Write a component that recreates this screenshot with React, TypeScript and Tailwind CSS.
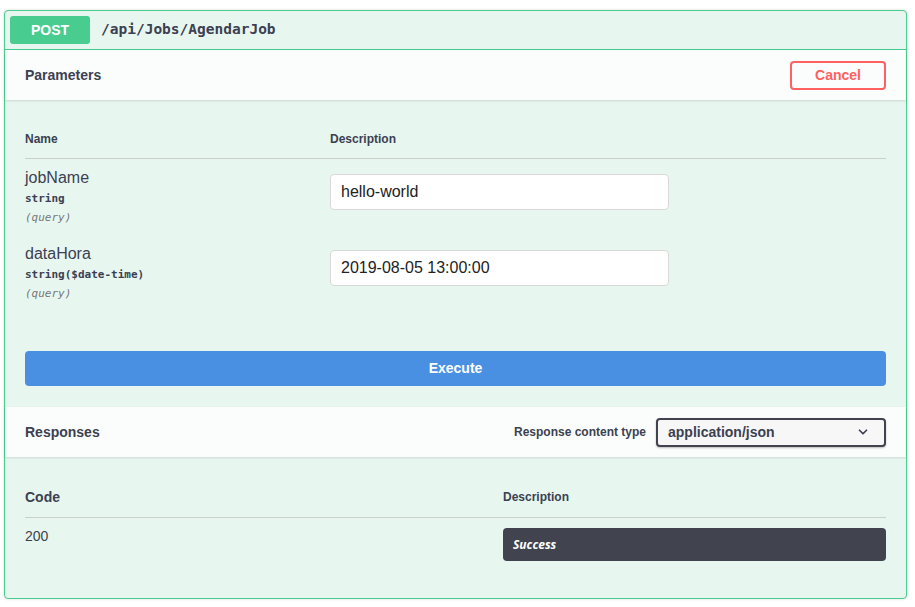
import React from 'react'
import { ChevronDown } from 'lucide-react'

const sans = "font-['Liberation_Sans',Arial,sans-serif]"
const mono = "font-['DejaVu_Sans_Mono','Liberation_Mono',monospace]"

interface Param {
  name: string
  type: string
  value: string
}

const params: Param[] = [
  { name: 'jobName', type: 'string', value: 'hello-world' },
  { name: 'dataHora', type: 'string($date-time)', value: '2019-08-05 13:00:00' }
]

function SectionHeader({ title, children }: { title: string; children?: React.ReactNode }) {
  return (
    <div className="h-[50px] flex items-center justify-between px-5 bg-[#fbfdfc] shadow-[0_1px_2px_rgba(0,0,0,0.12)] relative">
      <h4 className="text-[14px] font-bold text-[#3b4151]">{title}</h4>
      {children}
    </div>
  )
}

export default function App() {
  return (
    <div className={`min-h-screen bg-white pt-[10px] pl-[4px] ${sans} text-[#3b4151]`}>
      <div className="w-[903px] border border-[#49cc90] rounded-[4px] bg-[#e8f6f0] shadow-[0_0_3px_rgba(0,0,0,0.15)]">
        {/* Summary */}
        <div className="flex items-center p-[5px] border-b border-[#49cc90]">
          <span className="w-[80px] h-[28px] flex items-center justify-center rounded-[3px] bg-[#49cc90] text-white text-[14px] font-bold">
            POST
          </span>
          <span className={`ml-[11px] ${mono} text-[14.5px] font-bold text-[#3b4151]`}>/api/Jobs/AgendarJob</span>
        </div>

        {/* Parameters */}
        <SectionHeader title="Parameters">
          <button className="w-[96px] h-[29px] border-2 border-[#ff6060] rounded-[4px] text-[#ff6060] text-[14px] font-bold bg-transparent">
            Cancel
          </button>
        </SectionHeader>

        <div className="px-5 pt-5">
          <div className="flex h-[39px] items-center border-b border-[#c9cfcc] text-[12px] font-bold">
            <div className="w-[305px]">Name</div>
            <div>Description</div>
          </div>
          {params.map((p) => (
            <div key={p.name} className="flex py-[10px]">
              <div className="w-[305px]">
                <div className="text-[16px] leading-[18px]">{p.name}</div>
                <div className={`mt-[4px] ${mono} text-[11px] leading-[15px] font-bold text-[#3b4151]`}>{p.type}</div>
                <div className={`mt-[4px] ${mono} text-[11px] leading-[15px] italic text-[#777]`}>(query)</div>
              </div>
              <div>
                <input
                  readOnly
                  value={p.value}
                  className={`mt-[5px] w-[339px] h-[36px] px-[10px] bg-white border border-[#d9d9d9] rounded-[4px] text-[16px] text-[#222] outline-none ${sans}`}
                />
              </div>
            </div>
          ))}
        </div>

        <div className="px-5 pt-[40px] pb-[21px]">
          <button className="w-full h-[35px] rounded-[4px] bg-[#4990e2] text-white text-[14px] font-bold">Execute</button>
        </div>

        {/* Responses */}
        <SectionHeader title="Responses">
          <div className="flex items-center gap-[10px]">
            <span className="text-[12px] font-bold">Response content type</span>
            <div className="w-[230px] h-[29px] border-2 border-[#41444e] rounded-[4px] bg-[#f7f7f7] shadow-[0_1px_2px_rgba(0,0,0,0.25)] flex items-center justify-between pl-[10px] pr-[14px]">
              <span className="text-[14px] font-bold">application/json</span>
              <ChevronDown size={14} strokeWidth={3} className="text-[#3b4151]" />
            </div>
          </div>
        </SectionHeader>

        <div className="px-5 pt-5 pb-[37px]">
          <div className="flex h-[41px] items-center border-b border-[#c9cfcc]">
            <div className="w-[478px] text-[14px] font-bold">Code</div>
            <div className="text-[12px] font-bold">Description</div>
          </div>
          <div className="flex pt-[10px]">
            <div className="w-[478px] text-[14px] leading-[16px]">200</div>
            <div className="flex-1 h-[33px] rounded-[4px] bg-[#41444e] flex items-center px-[10px]">
              <span className="text-white text-[12px] font-bold italic font-['Open_Sans',sans-serif]">Success</span>
            </div>
          </div>
        </div>
      </div>
    </div>
  )
}
